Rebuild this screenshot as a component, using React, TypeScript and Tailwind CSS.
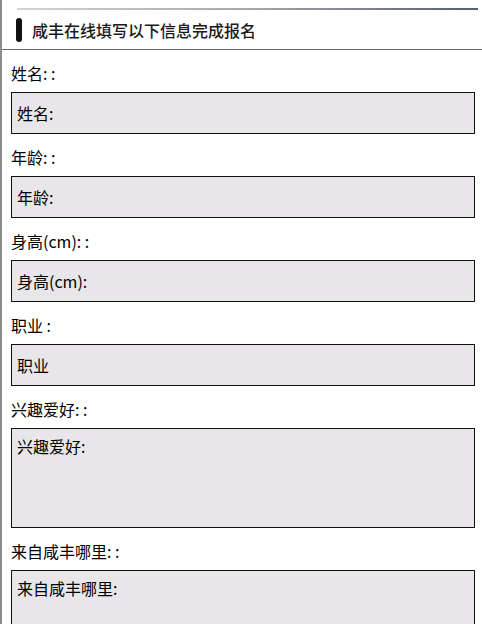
const fields = [
  { label: "姓名: :", placeholder: "姓名:", multiline: false },
  { label: "年龄: :", placeholder: "年龄:", multiline: false },
  { label: "身高(cm): :", placeholder: "身高(cm):", multiline: false },
  { label: "职业 :", placeholder: "职业", multiline: false },
  { label: "兴趣爱好: :", placeholder: "兴趣爱好:", multiline: true },
  { label: "来自咸丰哪里: :", placeholder: "来自咸丰哪里:", multiline: true },
];

const font = "font-['Microsoft_YaHei','Noto_Sans_CJK_SC',sans-serif]";

export default function App() {
  return (
    <div className={`min-h-screen w-[482px] bg-white border-l-2 border-[#8c8c8c] text-black ${font}`}>
      {/* top rule */}
      <div className="pt-[8px] pl-[15px] pr-[4px]">
        <div className="h-[2px] bg-gradient-to-r from-[#d4d4d4] via-[#a8a8a8] to-[#565d7a]" />
      </div>

      {/* title */}
      <div className="flex items-center h-[40px] pl-[14px] border-b border-[#6b6b6b]">
        <span className="w-[6px] h-[24px] rounded-[3px] bg-[#111]" />
        <h1 className="ml-[10px] text-[16px] leading-[24px] font-medium text-[#1a1a1a]">
          咸丰在线填写以下信息完成报名
        </h1>
      </div>

      {/* form */}
      <form className="pl-[9px] pr-[7px]">
        {fields.map((f) => (
          <div key={f.label}>
            <label className="block pt-[11px] mb-[7px] text-[16px] leading-[24px]">{f.label}</label>
            {f.multiline ? (
              <textarea
                readOnly
                placeholder={f.placeholder}
                className={`block w-full h-[100px] resize-none border border-[#111] bg-[#e8e6e8] px-[5px] pt-[5px] text-[16px] leading-[24px] outline-none placeholder:text-black ${font}`}
              />
            ) : (
              <input
                readOnly
                placeholder={f.placeholder}
                className={`block w-full h-[42px] border border-[#111] bg-[#e8e6e8] px-[5px] text-[16px] outline-none placeholder:text-black ${font}`}
              />
            )}
          </div>
        ))}
      </form>
    </div>
  );
}
